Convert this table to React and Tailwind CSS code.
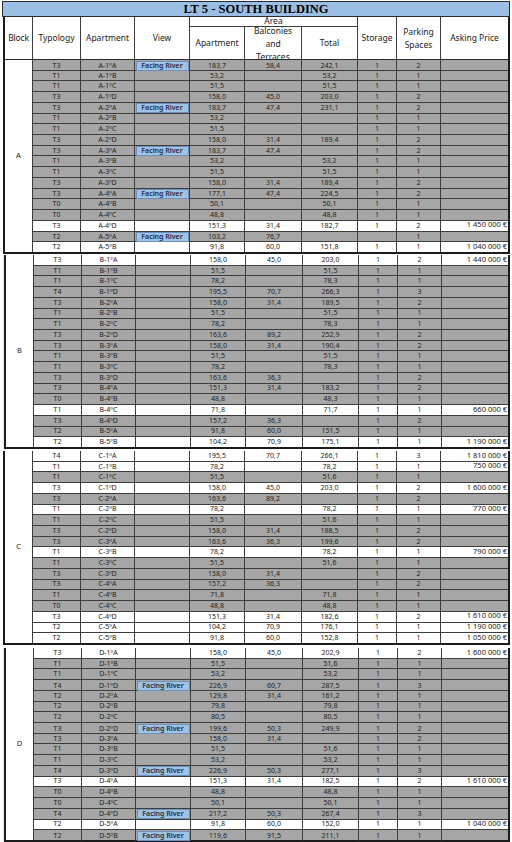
import React from "react";

const FR = "Facing River";
const raw = {
  A: [
    ["T3", "A-1ºA", FR, "183,7", "58,4", "242,1", "1", "2", ""],
    ["T1", "A-1ºB", "", "53,2", "", "53,2", "1", "1", ""],
    ["T1", "A-1ºC", "", "51,5", "", "51,5", "1", "1", ""],
    ["T3", "A-1ºD", "", "158,0", "45,0", "203,0", "1", "2", ""],
    ["T3", "A-2ºA", FR, "183,7", "47,4", "231,1", "1", "2", ""],
    ["T1", "A-2ºB", "", "53,2", "", "", "1", "1", ""],
    ["T1", "A-2ºC", "", "51,5", "", "", "1", "1", ""],
    ["T3", "A-2ºD", "", "158,0", "31,4", "189,4", "1", "2", ""],
    ["T3", "A-3ºA", FR, "183,7", "47,4", "", "1", "2", ""],
    ["T1", "A-3ºB", "", "53,2", "", "53,2", "1", "1", ""],
    ["T1", "A-3ºC", "", "51,5", "", "51,5", "1", "1", ""],
    ["T3", "A-3ºD", "", "158,0", "31,4", "189,4", "1", "2", ""],
    ["T3", "A-4ºA", FR, "177,1", "47,4", "224,5", "1", "2", ""],
    ["T0", "A-4ºB", "", "50,1", "", "50,1", "1", "1", ""],
    ["T0", "A-4ºC", "", "48,8", "", "48,8", "1", "1", ""],
    ["T3", "A-4ºD", "", "151,3", "31,4", "182,7", "1", "2", "1 450 000 €"],
    ["T2", "A-5ºA", FR, "103,2", "76,7", "", "", "1", ""],
    ["T2", "A-5ºB", "", "91,8", "60,0", "151,8", "1", "1", "1 040 000 €"],
  ],
  B: [
    ["T3", "B-1ºA", "", "158,0", "45,0", "203,0", "1", "2", "1 440 000 €"],
    ["T1", "B-1ºB", "", "51,5", "", "51,5", "1", "1", ""],
    ["T1", "B-1ºC", "", "78,2", "", "78,3", "1", "1", ""],
    ["T4", "B-1ºD", "", "195,5", "70,7", "266,3", "1", "3", ""],
    ["T3", "B-2ºA", "", "158,0", "31,4", "189,5", "1", "2", ""],
    ["T1", "B-2ºB", "", "51,5", "", "51,5", "1", "1", ""],
    ["T1", "B-2ºC", "", "78,2", "", "78,3", "1", "1", ""],
    ["T3", "B-2ºD", "", "163,6", "89,2", "252,9", "1", "2", ""],
    ["T3", "B-3ºA", "", "158,0", "31,4", "190,4", "1", "2", ""],
    ["T1", "B-3ºB", "", "51,5", "", "51,5", "1", "1", ""],
    ["T1", "B-3ºC", "", "78,2", "", "78,3", "1", "1", ""],
    ["T3", "B-3ºD", "", "163,6", "36,3", "", "1", "2", ""],
    ["T3", "B-4ºA", "", "151,3", "31,4", "183,2", "1", "2", ""],
    ["T0", "B-4ºB", "", "48,8", "", "48,3", "1", "1", ""],
    ["T1", "B-4ºC", "", "71,8", "", "71,7", "1", "1", "660 000 €"],
    ["T3", "B-4ºD", "", "157,2", "36,3", "", "1", "2", ""],
    ["T2", "B-5ºA", "", "91,8", "60,0", "151,5", "1", "1", ""],
    ["T2", "B-5ºB", "", "104,2", "70,9", "175,1", "1", "1", "1 190 000 €"],
  ],
  C: [
    ["T4", "C-1ºA", "", "195,5", "70,7", "266,1", "1", "3", "1 810 000 €"],
    ["T1", "C-1ºB", "", "78,2", "", "78,2", "1", "1", "750 000 €"],
    ["T1", "C-1ºC", "", "51,5", "", "51,6", "1", "1", ""],
    ["T3", "C-1ºD", "", "158,0", "45,0", "203,0", "1", "2", "1 600 000 €"],
    ["T3", "C-2ºA", "", "163,6", "89,2", "", "1", "2", ""],
    ["T1", "C-2ºB", "", "78,2", "", "78,2", "1", "1", "770 000 €"],
    ["T1", "C-2ºC", "", "51,5", "", "51,6", "1", "1", ""],
    ["T3", "C-2ºD", "", "158,0", "31,4", "188,5", "1", "2", ""],
    ["T3", "C-3ºA", "", "163,6", "36,3", "199,6", "1", "2", ""],
    ["T1", "C-3ºB", "", "78,2", "", "78,2", "1", "1", "790 000 €"],
    ["T1", "C-3ºC", "", "51,5", "", "51,6", "1", "1", ""],
    ["T3", "C-3ºD", "", "158,0", "31,4", "", "1", "2", ""],
    ["T3", "C-4ºA", "", "157,2", "36,3", "", "1", "2", ""],
    ["T1", "C-4ºB", "", "71,8", "", "71,8", "1", "1", ""],
    ["T0", "C-4ºC", "", "48,8", "", "48,8", "1", "1", ""],
    ["T3", "C-4ºD", "", "151,3", "31,4", "182,6", "1", "2", "1 610 000 €"],
    ["T2", "C-5ºA", "", "104,2", "70,9", "176,1", "1", "1", "1 190 000 €"],
    ["T2", "C-5ºB", "", "91,8", "60,0", "152,8", "1", "1", "1 050 000 €"],
  ],
  D: [
    ["T3", "D-1ºA", "", "158,0", "45,0", "202,9", "1", "2", "1 600 000 €"],
    ["T1", "D-1ºB", "", "51,5", "", "51,6", "1", "1", ""],
    ["T1", "D-1ºC", "", "53,2", "", "53,2", "1", "1", ""],
    ["T4", "D-1ºD", FR, "226,9", "60,7", "287,5", "1", "3", ""],
    ["T2", "D-2ºA", "", "129,8", "31,4", "161,2", "1", "1", ""],
    ["T2", "D-2ºB", "", "79,8", "", "79,8", "1", "1", ""],
    ["T2", "D-2ºC", "", "80,5", "", "80,5", "1", "1", ""],
    ["T3", "D-2ºD", FR, "199,6", "50,3", "249,9", "1", "2", ""],
    ["T3", "D-3ºA", "", "158,0", "31,4", "", "1", "2", ""],
    ["T1", "D-3ºB", "", "51,5", "", "51,6", "1", "1", ""],
    ["T1", "D-3ºC", "", "53,2", "", "53,2", "1", "1", ""],
    ["T4", "D-3ºD", FR, "226,9", "50,3", "277,1", "1", "3", ""],
    ["T3", "D-4ºA", "", "151,3", "31,4", "182,5", "1", "2", "1 610 000 €"],
    ["T0", "D-4ºB", "", "48,8", "", "48,8", "1", "1", ""],
    ["T0", "D-4ºC", "", "50,1", "", "50,1", "1", "1", ""],
    ["T4", "D-4ºD", FR, "217,2", "50,3", "267,4", "1", "3", ""],
    ["T2", "D-5ºA", "", "91,8", "60,0", "152,0", "1", "1", "1 040 000 €"],
    ["T2", "D-5ºB", FR, "119,6", "91,5", "211,1", "1", "1", ""],
  ],
};

const GRID =
  "grid grid-cols-[48px_54px_55px_55px_57px_56px_39px_44px_1fr]";

function Cell({ children }) {
  return (
    <div className="flex items-center justify-center border-r border-[#3c3c3c] pb-[1px] leading-none">
      {children}
    </div>
  );
}

function Row({ r, isLast }) {
  const white = r[8] !== "";
  return (
    <div
      className={`flex-1 min-h-0 ${GRID} ${
        isLast ? "" : "border-b border-[#3c3c3c]"
      } ${white ? "bg-white" : "bg-[#a6a6a6]"}`}
    >
      <Cell>{r[0]}</Cell>
      <Cell>{r[1]}</Cell>
      {r[2] ? (
        <div className="border-r border-[#3c3c3c] p-[0.5px]">
          <div className="h-full w-full bg-[#9dc3e6] border border-[#6f8fbd] flex items-center justify-center text-[7px] font-semibold text-[#1f2a44] leading-none pb-[1px]">
            {r[2]}
          </div>
        </div>
      ) : (
        <Cell></Cell>
      )}
      <Cell>{r[3]}</Cell>
      <Cell>{r[4]}</Cell>
      <Cell>{r[5]}</Cell>
      <Cell>{r[6]}</Cell>
      <Cell>{r[7]}</Cell>
      <div className="flex items-start justify-end pr-[1px] pt-[0.5px] leading-none text-[7.5px]">
        {r[8]}
      </div>
    </div>
  );
}

function Block({ name, shift }) {
  const rows = raw[name];
  return (
    <div className={shift ? "bg-[#ececec] pl-[1px]" : "bg-white"}>
      <div className="flex h-[194px] border-x-2 border-b-2 border-[#1c1c1c] bg-white">
        <div className="w-[28px] shrink-0 flex items-center justify-center border-r border-[#3c3c3c] text-[7.5px] text-[#222]">
          {name}
        </div>
        <div className="flex-1 flex flex-col text-[7px] text-[#222]">
          {rows.map((r, i) => (
            <Row key={i} r={r} isLast={i === rows.length - 1} />
          ))}
        </div>
      </div>
    </div>
  );
}

export default function App() {
  return (
    <div className="w-[512px] h-[842px] bg-white pl-[3px] pr-[2px] pt-[1px] overflow-hidden font-['Noto_Sans',sans-serif]">
      <div className="h-[16px] -ml-[1px] bg-[#9bbfe4] border border-[#2a2a2a] flex items-center justify-center font-['Liberation_Serif',serif] font-bold text-[12.5px] leading-none text-black">
        LT 5 - SOUTH BUILDING
      </div>
      <div className="flex h-[43px] border-x-2 border-[#1c1c1c] border-b border-b-[#2a2a2a] bg-white text-[8.5px] text-[#222]">
        <div className="w-[28px] shrink-0 flex items-center justify-center border-r border-[#3c3c3c] tracking-[-0.2px]">
          Block
        </div>
        <div className={`flex-1 ${GRID} grid-rows-[10px_1fr]`}>
          <div className="row-span-2 flex items-center justify-center border-r border-[#3c3c3c]">
            Typology
          </div>
          <div className="row-span-2 flex items-center justify-center border-r border-[#3c3c3c]">
            Apartment
          </div>
          <div className="row-span-2 flex items-center justify-center border-r border-[#3c3c3c]">
            View
          </div>
          <div className="col-span-3 flex items-center justify-center border-r border-b border-[#3c3c3c] leading-none">
            Area
          </div>
          <div className="col-start-7 row-start-1 row-span-2 flex items-center justify-center border-r border-[#3c3c3c]">
            Storage
          </div>
          <div className="col-start-8 row-start-1 row-span-2 flex flex-col items-center justify-center border-r border-[#3c3c3c] leading-[13px] text-center">
            <span>Parking</span>
            <span>Spaces</span>
          </div>
          <div className="col-start-9 row-start-1 row-span-2 flex items-center justify-center">
            Asking Price
          </div>
          <div className="col-start-4 row-start-2 flex items-center justify-center border-r border-[#3c3c3c]">
            Apartment
          </div>
          <div className="col-start-5 row-start-2 flex flex-col items-center justify-center overflow-hidden border-r border-[#3c3c3c] leading-[13px]">
            <span>Balconies</span>
            <span>and</span>
            <span>Terraces</span>
          </div>
          <div className="col-start-6 row-start-2 flex items-center justify-center border-r border-[#3c3c3c]">
            Total
          </div>
        </div>
      </div>
      <Block name="A" />
      <div className="h-[1px]" />
      <Block name="B" shift />
      <div className="h-[2px]" />
      <Block name="C" />
      <div className="h-[3px]" />
      <Block name="D" shift />
    </div>
  );
}
